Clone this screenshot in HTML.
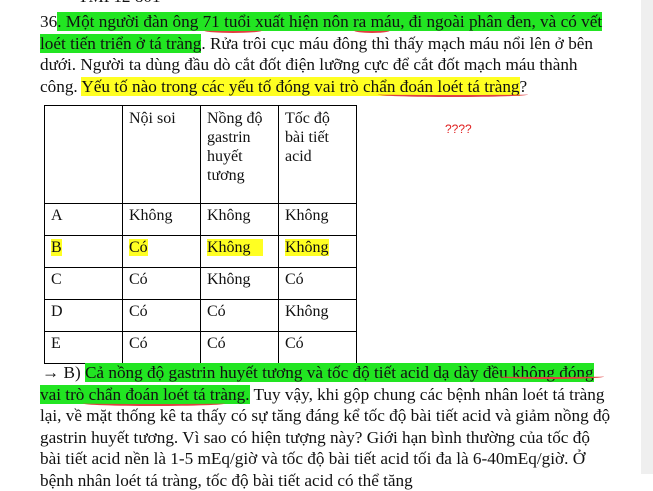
<!DOCTYPE html>
<html><head><meta charset="utf-8"><style>
body{margin:0;width:653px;height:474px;overflow:hidden;background:#fff;position:relative;font-family:"Liberation Serif","Noto Serif CJK SC",serif;color:#111;}
.l{position:absolute;left:40px;white-space:nowrap;font-size:17.2px;line-height:21px;height:21px;}
.g{background:#22e522;}
.y{background:#ffff22;}
.sb{position:absolute;left:641px;top:0;width:12px;height:474px;background:#efefef;}
table{position:absolute;left:44px;top:105px;border-collapse:collapse;font-size:16px;line-height:19px;}
td{border:1px solid #000;width:65px;padding:2px 6px;vertical-align:top;height:27px;}
tr.h td{height:92px;padding-top:3px;}
.u{position:absolute;border-bottom:2px solid #e04040;border-radius:0 0 50% 50%;height:3px;}
</style></head><body>
<div class="l" style="top:-14px;left:78px;">TMP12 801</div>
<div class="l" style="top:11px;">36<span class="g">. Một người đàn ông 71 tuổi xuất hiện nôn ra máu, đi ngoài phân đen, và có vết</span></div>
<div class="l" style="top:33px;"><span class="g">loét tiến triển ở tá tràng</span>. Rửa trôi cục máu đông thì thấy mạch máu nổi lên ở bên</div>
<div class="l" style="top:54px;">dưới. Người ta dùng đầu dò cắt đốt điện lưỡng cực để cắt đốt mạch máu thành</div>
<div class="l" style="top:76px;">công. <span class="y">Yếu tố nào trong các yếu tố đóng vai trò chẩn đoán loét tá tràng</span>?</div>
<div class="u" style="left:204px;top:28px;width:58px;"></div>
<div class="u" style="left:354px;top:28px;width:36px;"></div>
<div class="u" style="left:378px;top:92px;width:150px;"></div>
<table>
<tr class="h"><td></td><td>Nội soi</td><td>Nồng độ gastrin huyết tương</td><td>Tốc độ bài tiết acid</td></tr>
<tr><td>A</td><td>Không</td><td>Không</td><td>Không</td></tr>
<tr><td><span class="y">B</span></td><td><span class="y">Có</span></td><td><span class="y">Không&nbsp;&nbsp;&nbsp;</span></td><td><span class="y">Không</span></td></tr>
<tr><td>C</td><td>Có</td><td>Không</td><td>Có</td></tr>
<tr><td>D</td><td>Có</td><td>Có</td><td>Không</td></tr>
<tr><td>E</td><td>Có</td><td>Có</td><td>Có</td></tr>
</table>
<div style="position:absolute;left:445px;top:122px;font-family:'Liberation Sans',sans-serif;font-size:12px;color:#e02020;">????</div>
<div class="l" style="top:362px;left:42px;"><b>→</b> B) <span class="g">Cả nồng độ gastrin huyết tương và tốc độ tiết acid dạ dày đều không đóng</span></div>
<div class="l" style="top:384px;"><span class="g">vai trò chẩn đoán loét tá tràng.</span> Tuy vậy, khi gộp chung các bệnh nhân loét tá tràng</div>
<div class="l" style="top:405px;">lại, về mặt thống kê ta thấy có sự tăng đáng kể tốc độ bài tiết acid và giảm nồng độ</div>
<div class="l" style="top:427px;">gastrin huyết tương. Vì sao có hiện tượng này? Giới hạn bình thường của tốc độ</div>
<div class="l" style="top:448px;">bài tiết acid nền là 1-5 mEq/giờ và tốc độ bài tiết acid tối đa là 6-40mEq/giờ. Ở</div>
<div class="l" style="top:470px;">bệnh nhân loét tá tràng, tốc độ bài tiết acid có thể tăng</div>
<div class="u" style="left:498px;top:374px;width:106px;"></div>
<div class="u" style="left:83px;top:401px;width:142px;"></div>
<div class="sb"></div>
</body></html>
